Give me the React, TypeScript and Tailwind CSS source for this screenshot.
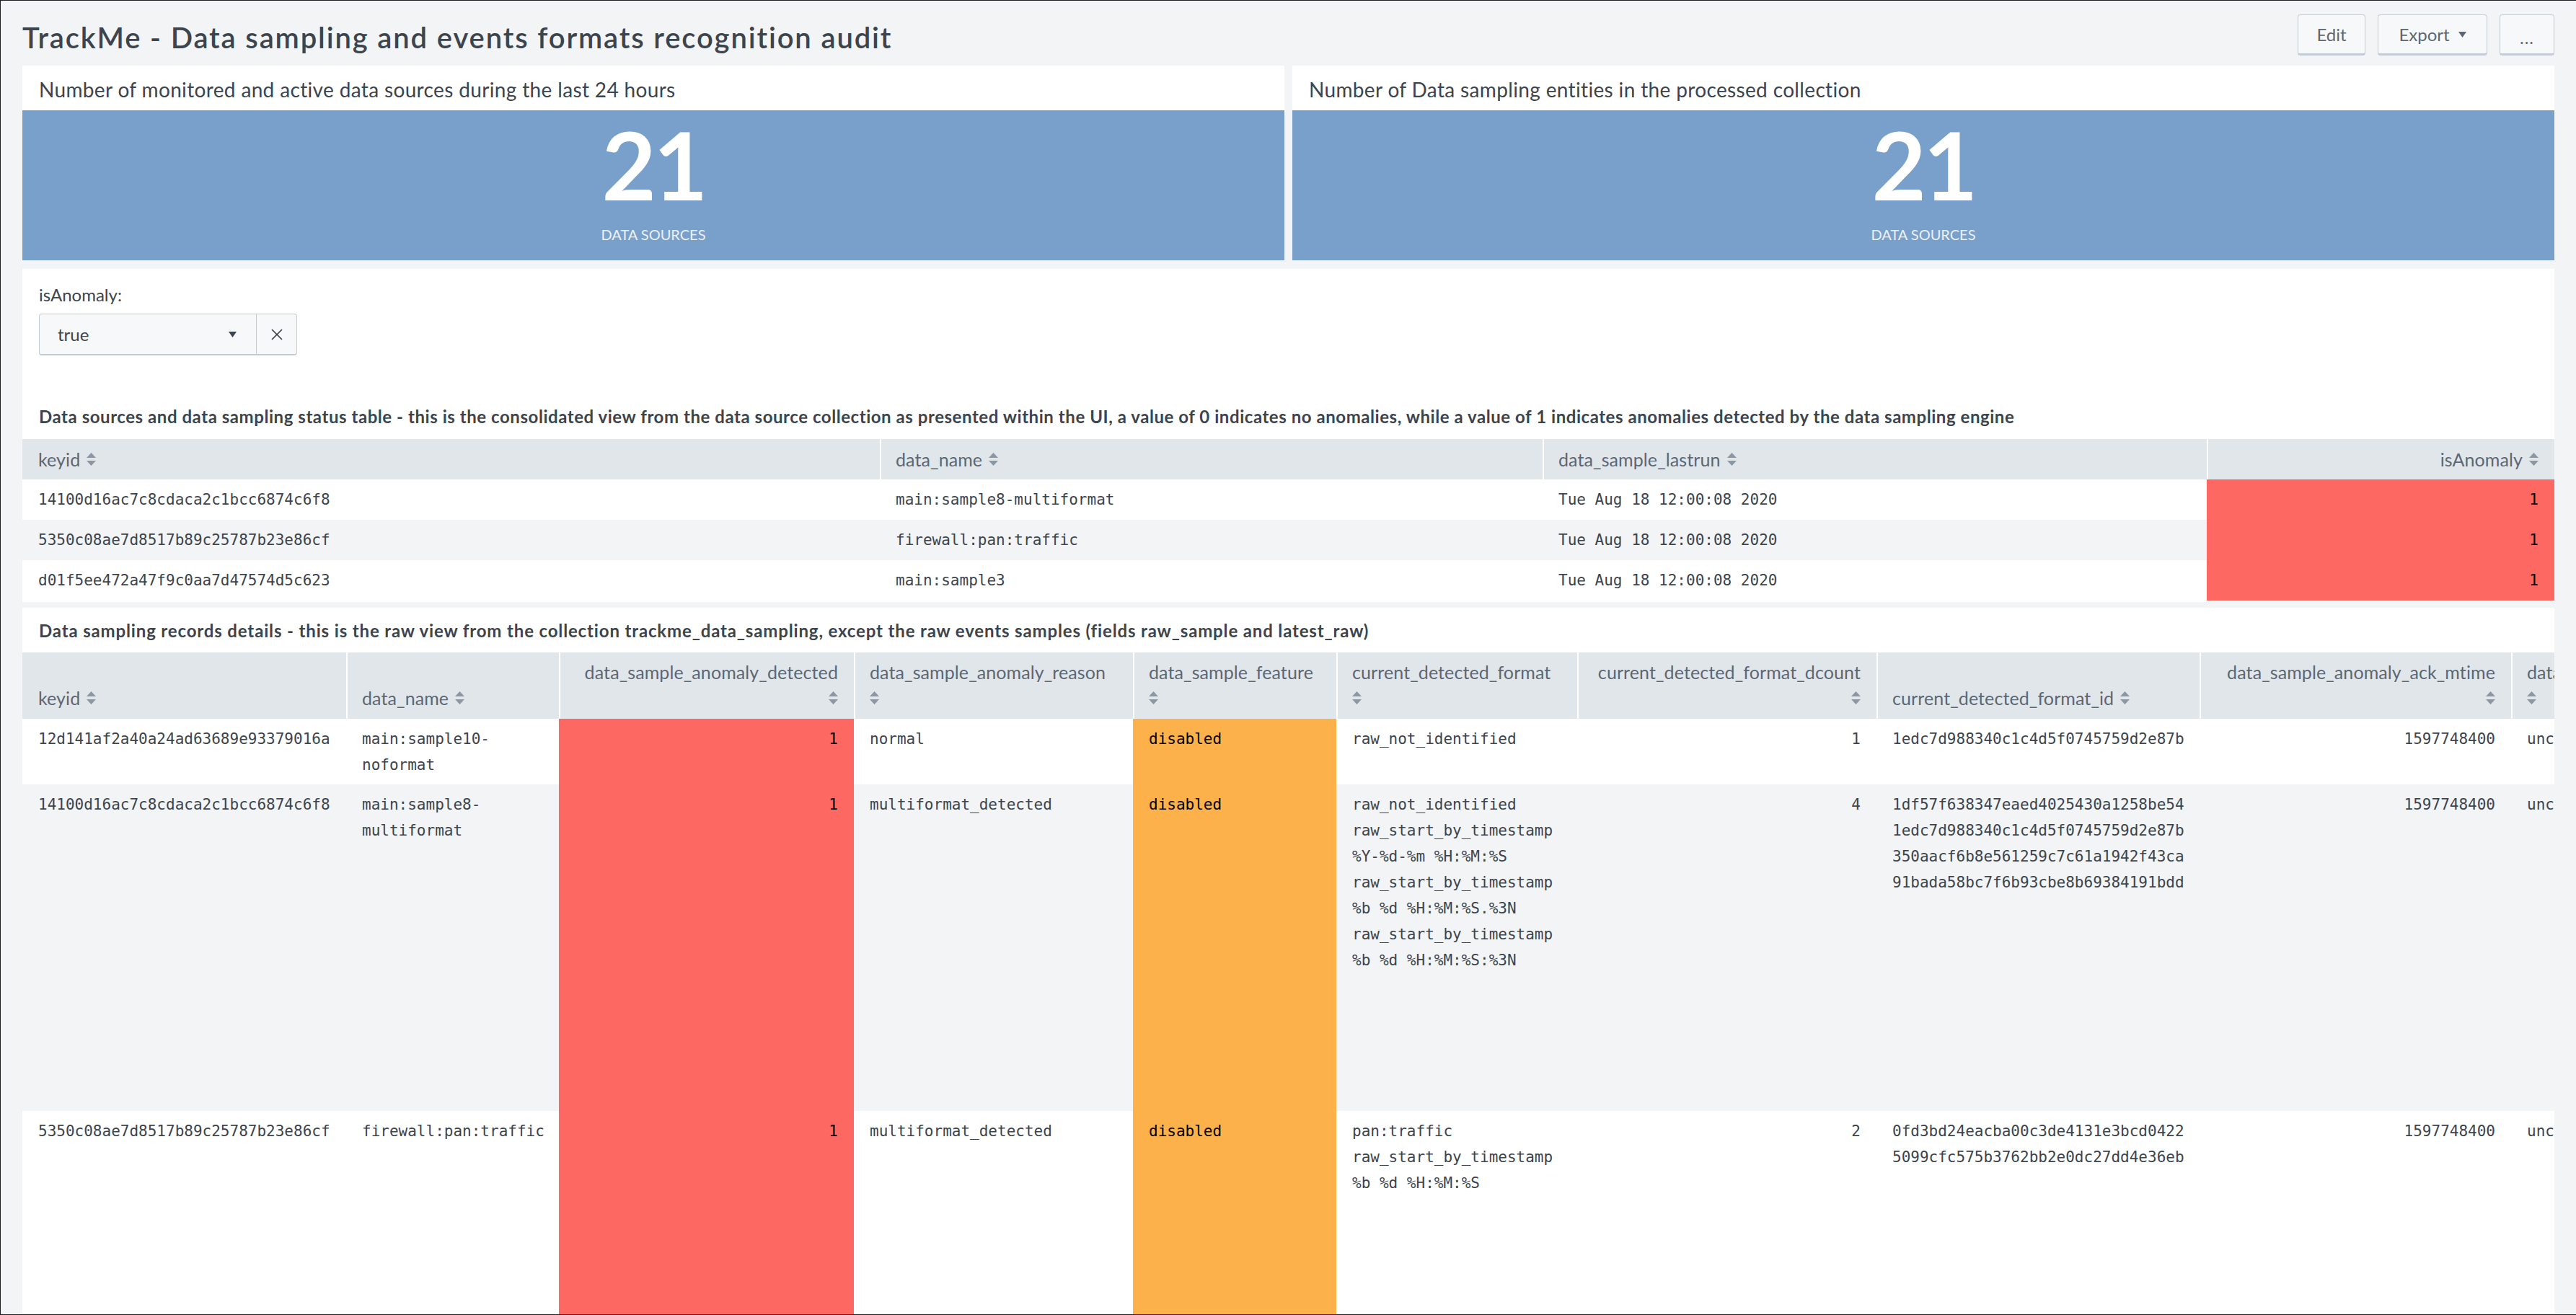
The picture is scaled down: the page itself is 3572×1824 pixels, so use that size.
import React from "react";
import { X } from "lucide-react";

const SANS = "font-['Lato','Open_Sans',sans-serif]";
const MONO = "font-['DejaVu_Sans_Mono',monospace]";

function SortIcon() {
  return (
    <svg width="13" height="18" viewBox="0 0 13 18" className="shrink-0">
      <path d="M6.5 0 L13 7 L0 7 Z" fill="#8d97a2" />
      <path d="M6.5 18 L13 11 L0 11 Z" fill="#8d97a2" />
    </svg>
  );
}

function Caret({ w = 11, h = 8, color = "#3c444d" }: { w?: number; h?: number; color?: string }) {
  return (
    <svg width={w} height={h} viewBox="0 0 11 8">
      <path d="M0 0 L11 0 L5.5 8 Z" fill={color} />
    </svg>
  );
}

function SingleValue({ title }: { title: string }) {
  return (
    <div className="flex-1 bg-white flex flex-col">
      <div className="h-[62px] flex items-center px-[23px] pt-[4px] text-[28px] tracking-[0.35px] text-[#3c444d] whitespace-nowrap">{title}</div>
      <div className="h-[208px] bg-[#799fcb] flex flex-col items-center">
        <div className="mt-[10px] text-[130px] leading-none font-bold text-white tracking-[-4px]">21</div>
        <div className="mt-[20px] text-[20px] leading-[24px] text-white/85">DATA SOURCES</div>
      </div>
    </div>
  );
}

type T1Row = { keyid: string; name: string; last: string; anomaly: string };
const t1rows: T1Row[] = [
  { keyid: "14100d16ac7c8cdaca2c1bcc6874c6f8", name: "main:sample8-multiformat", last: "Tue Aug 18 12:00:08 2020", anomaly: "1" },
  { keyid: "5350c08ae7d8517b89c25787b23e86cf", name: "firewall:pan:traffic", last: "Tue Aug 18 12:00:08 2020", anomaly: "1" },
  { keyid: "d01f5ee472a47f9c0aa7d47574d5c623", name: "main:sample3", last: "Tue Aug 18 12:00:08 2020", anomaly: "1" },
];

type Col = { label: string; w: string; right?: boolean; wrap?: boolean; bg?: string; strong?: boolean };
const t2cols: Col[] = [
  { label: "keyid", w: "w-[449px]" },
  { label: "data_name", w: "w-[295px]" },
  { label: "data_sample_anomaly_detected", w: "w-[409px]", right: true, wrap: true, bg: "bg-[#fe6862]", strong: true },
  { label: "data_sample_anomaly_reason", w: "w-[387px]", wrap: true },
  { label: "data_sample_feature", w: "w-[282px]", wrap: true, bg: "bg-[#fdb14a]", strong: true },
  { label: "current_detected_format", w: "w-[334px]", wrap: true },
  { label: "current_detected_format_dcount", w: "w-[415px]", right: true, wrap: true },
  { label: "current_detected_format_id", w: "w-[448px]" },
  { label: "data_sample_anomaly_ack_mtime", w: "w-[432px]", right: true, wrap: true },
  { label: "data_sample_status_message", w: "w-[320px]", wrap: true },
];

const t2rows: { h: string; stripe: boolean; cells: string[][] }[] = [
  {
    h: "h-[91px]",
    stripe: false,
    cells: [
      ["12d141af2a40a24ad63689e93379016a"],
      ["main:sample10-", "noformat"],
      ["1"],
      ["normal"],
      ["disabled"],
      ["raw_not_identified"],
      ["1"],
      ["1edc7d988340c1c4d5f0745759d2e87b"],
      ["1597748400"],
      ["unclassified"],
    ],
  },
  {
    h: "h-[453px]",
    stripe: true,
    cells: [
      ["14100d16ac7c8cdaca2c1bcc6874c6f8"],
      ["main:sample8-", "multiformat"],
      ["1"],
      ["multiformat_detected"],
      ["disabled"],
      [
        "raw_not_identified",
        "raw_start_by_timestamp",
        "%Y-%d-%m %H:%M:%S",
        "raw_start_by_timestamp",
        "%b %d %H:%M:%S.%3N",
        "raw_start_by_timestamp",
        "%b %d %H:%M:%S:%3N",
      ],
      ["4"],
      [
        "1df57f638347eaed4025430a1258be54",
        "1edc7d988340c1c4d5f0745759d2e87b",
        "350aacf6b8e561259c7c61a1942f43ca",
        "91bada58bc7f6b93cbe8b69384191bdd",
      ],
      ["1597748400"],
      ["unclassified"],
    ],
  },
  {
    h: "h-[420px]",
    stripe: false,
    cells: [
      ["5350c08ae7d8517b89c25787b23e86cf"],
      ["firewall:pan:traffic"],
      ["1"],
      ["multiformat_detected"],
      ["disabled"],
      ["pan:traffic", "raw_start_by_timestamp", "%b %d %H:%M:%S"],
      ["2"],
      ["0fd3bd24eacba00c3de4131e3bcd0422", "5099cfc575b3762bb2e0dc27dd4e36eb"],
      ["1597748400"],
      ["unclassified"],
    ],
  },
];

const monoCell = `${MONO} text-[21px] leading-[36px]`;
const headText = "font-normal text-[25px] tracking-[0.1px] leading-[36px] text-[#5c6773]";

export default function App() {
  return (
    <div className={`w-[3572px] h-[1824px] overflow-hidden bg-[#f2f4f5] border-t border-l border-b border-[#1c1e22] ${SANS}`}>
      {/* Header */}
      <div className="h-[90px] flex items-start justify-between px-[30px]">
        <h1 className="mt-[27px] text-[40px] leading-[48px] font-semibold text-[#3c444d] tracking-[1.85px] whitespace-nowrap">
          TrackMe - Data sampling and events formats recognition audit
        </h1>
        <div className="mt-[19px] flex gap-[17px]">
          <button className="w-[94px] h-[57px] rounded-[4px] border border-[#c3cbd4] border-b-[3px] bg-[#f7f8fa] text-[24px] text-[#5c6773]">
            Edit
          </button>
          <button className="w-[152px] h-[57px] rounded-[4px] border border-[#c3cbd4] border-b-[3px] bg-[#f7f8fa] text-[24px] text-[#5c6773] flex items-center justify-center gap-[12px]">
            <span>Export</span>
            <Caret w={11} h={8} color="#5c6773" />
          </button>
          <button className="w-[76px] h-[57px] rounded-[4px] border border-[#c3cbd4] border-b-[3px] bg-[#f7f8fa] text-[24px] text-[#5c6773] flex items-end justify-center pb-[10px]">
            <span className="leading-none tracking-[1px]">...</span>
          </button>
        </div>
      </div>

      {/* Single values */}
      <div className="flex gap-[11px] px-[30px]">
        <SingleValue title="Number of monitored and active data sources during the last 24 hours" />
        <SingleValue title="Number of Data sampling entities in the processed collection" />
      </div>

      {/* Filter + status table */}
      <div className="px-[30px] mt-[12px]">
        <div className="bg-white pb-[2px]">
          <div className="px-[23px] pt-[18px]">
            <div className="text-[24px] leading-[36px] text-[#3c444d]">isAnomaly:</div>
            <div className="mt-[8px] flex w-[358px] h-[58px] rounded-[4px] border border-[#c3cbd4] border-b-2 bg-[#f7f8fa]">
              <div className="flex-1 flex items-center justify-between pl-[25px] pr-[27px] text-[24px] text-[#3c444d]">
                <span>true</span>
                <Caret />
              </div>
              <div className="w-[56px] border-l border-[#c3cbd4] flex items-center justify-center text-[#3c444d]">
                <X size={26} strokeWidth={1.6} />
              </div>
            </div>
            <div className="mt-[67px] text-[24px] leading-[36px] font-bold tracking-[0.55px] text-[#3c444d] whitespace-nowrap">
              Data sources and data sampling status table - this is the consolidated view from the data source collection as presented within the UI, a value of 0 indicates no anomalies, while a value of 1 indicates anomalies detected by the data sampling engine
            </div>
          </div>
          <table className="mt-[13px] w-full table-fixed border-separate border-spacing-0">
            <colgroup>
              <col className="w-[1189px]" />
              <col className="w-[919px]" />
              <col className="w-[921px]" />
              <col />
            </colgroup>
            <thead>
              <tr className="bg-[#e1e6eb] h-[56px]">
                <th className={`px-[22px] text-left ${headText}`}>
                  <div className="flex items-center gap-[9px]">keyid<SortIcon /></div>
                </th>
                <th className={`px-[22px] text-left ${headText} shadow-[inset_2px_0_0_#ffffff]`}>
                  <div className="flex items-center gap-[9px]">data_name<SortIcon /></div>
                </th>
                <th className={`px-[22px] text-left ${headText} shadow-[inset_2px_0_0_#ffffff]`}>
                  <div className="flex items-center gap-[9px]">data_sample_lastrun<SortIcon /></div>
                </th>
                <th className={`px-[22px] text-right ${headText} shadow-[inset_2px_0_0_#ffffff]`}>
                  <div className="flex items-center justify-end gap-[9px]">isAnomaly<SortIcon /></div>
                </th>
              </tr>
            </thead>
            <tbody>
              {t1rows.map((r, i) => (
                <tr key={r.keyid} className={`h-[56px] ${i % 2 === 1 ? "bg-[#f2f4f5]" : "bg-white"}`}>
                  <td className={`px-[22px] ${monoCell} text-[#3c444d] whitespace-nowrap`}>{r.keyid}</td>
                  <td className={`px-[22px] ${monoCell} text-[#3c444d] whitespace-nowrap`}>{r.name}</td>
                  <td className={`px-[22px] ${monoCell} text-[#3c444d] whitespace-nowrap`}>{r.last}</td>
                  <td className={`px-[22px] ${monoCell} text-black text-right bg-[#fe6862]`}>{r.anomaly}</td>
                </tr>
              ))}
            </tbody>
          </table>
        </div>
      </div>

      {/* Records details */}
      <div className="px-[30px] mt-[8px]">
        <div className="bg-white overflow-hidden">
          <div className="px-[23px] pt-[14px] text-[24px] leading-[36px] font-bold tracking-[0.85px] text-[#3c444d] whitespace-nowrap">
            Data sampling records details - this is the raw view from the collection trackme_data_sampling, except the raw events samples (fields raw_sample and latest_raw)
          </div>
          <table className="mt-[12px] table-fixed border-separate border-spacing-0 w-[3771px]">
            <colgroup>
              {t2cols.map((c) => (
                <col key={c.label} className={c.w} />
              ))}
            </colgroup>
            <thead>
              <tr className="bg-[#e1e6eb] h-[92px]">
                {t2cols.map((c, i) => (
                  <th
                    key={c.label}
                    className={`px-[22px] pt-[9px] pb-[11px] align-bottom ${headText} ${
                      c.right ? "text-right" : "text-left"
                    } ${i > 0 ? "shadow-[inset_2px_0_0_#ffffff]" : ""}`}
                  >
                    {c.wrap ? (
                      <div className={`flex flex-col ${c.right ? "items-end" : "items-start"}`}>
                        <span className="whitespace-nowrap">{c.label}</span>
                        <span className="h-[36px] flex items-center">
                          <SortIcon />
                        </span>
                      </div>
                    ) : (
                      <div className={`flex items-center gap-[9px] whitespace-nowrap ${c.right ? "justify-end" : ""}`}>
                        {c.label}
                        <SortIcon />
                      </div>
                    )}
                  </th>
                ))}
              </tr>
            </thead>
            <tbody>
              {t2rows.map((r, ri) => (
                <tr key={ri} className={`${r.h} ${r.stripe ? "bg-[#f2f4f5]" : "bg-white"}`}>
                  {r.cells.map((lines, ci) => {
                    const c = t2cols[ci];
                    return (
                      <td
                        key={ci}
                        className={`px-[22px] pt-[10px] align-top ${monoCell} ${c.right ? "text-right" : "text-left"} ${
                          c.bg ?? ""
                        } ${c.strong ? "text-black" : "text-[#3c444d]"}`}
                      >
                        {lines.map((l, li) => (
                          <div key={li} className="whitespace-pre">
                            {l}
                          </div>
                        ))}
                      </td>
                    );
                  })}
                </tr>
              ))}
            </tbody>
          </table>
        </div>
      </div>
    </div>
  );
}
